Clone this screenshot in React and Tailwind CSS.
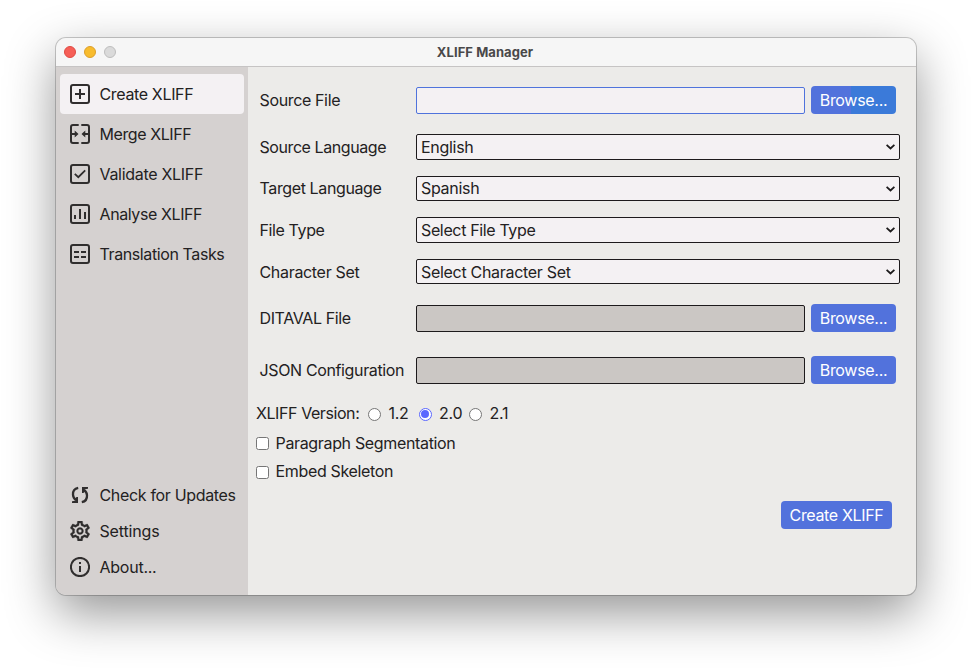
import React from "react";

const iconProps = {
  width: 20,
  height: 20,
  viewBox: "0 0 20 20",
  fill: "none",
  stroke: "#302e2e",
  strokeWidth: 2,
  className: "shrink-0",
};

const Frame = () => <rect x="1" y="1" width="18" height="18" rx="2" />;

const CreateIcon = () => (
  <svg {...iconProps}>
    <Frame />
    <path d="M10 5v10M5 10h10" />
  </svg>
);

const MergeIcon = () => (
  <svg {...iconProps}>
    <path d="M8.700 1H3Q1 1 1 3v14q0 2 2 2h5.700M11.300 1H17q2 0 2 2v14q0 2-2 2h-5.700" />
    <path d="M1 10h5M19 10h-5" />
    <path d="M4.700 6.500L8.500 10l-3.800 3.500zM15.300 6.500L11.500 10l3.800 3.500z" fill="#302e2e" stroke="none" />
  </svg>
);

const ValidateIcon = () => (
  <svg {...iconProps}>
    <Frame />
    <path d="M4.800 9.800l3.500 3.400L15.200 6.300" strokeWidth="1.800" />
  </svg>
);

const AnalyseIcon = () => (
  <svg {...iconProps}>
    <Frame />
    <path d="M5 11v4M10 5v10M15 8v7" />
  </svg>
);

const TasksIcon = () => (
  <svg {...iconProps}>
    <Frame />
    <path d="M4 8h5M11 8h5M4 13h5M11 13h5" />
  </svg>
);

const UpdatesIcon = () => (
  <svg {...iconProps}>
    <path
      d="M8.200 2.800C4.500 3.500 2.800 6.500 3 9.700c.1 2.300 1.200 4 3 5.300M11.800 17.200c3.700-.7 5.400-3.700 5.200-6.900-.1-2.300-1.200-4-3-5.300"
      strokeWidth="2.300"
    />
    <path d="M2 16.200l3.200-.5L6.300 12H8v6H2zM18 3.800l-3.200.5L13.700 8H12V2h6z" fill="#302e2e" stroke="none" />
  </svg>
);

const SettingsIcon = () => (
  <svg {...iconProps} viewBox="2 2 20 20">
    <path
      fill="#302e2e"
      stroke="#302e2e"
      strokeWidth="0.3"
      d="M19.430 12.980c.04-.32.07-.64.07-.98 0-.34-.03-.66-.07-.98l2.110-1.650c.19-.15.24-.42.12-.64l-2-3.460c-.09-.16-.26-.25-.44-.25-.06 0-.12.01-.17.03l-2.490 1c-.52-.4-1.080-.73-1.690-.98l-.38-2.650C14.460 2.180 14.250 2 14 2h-4c-.25 0-.46.18-.49.42l-.38 2.650c-.61.25-1.170.59-1.690.98l-2.490-1c-.06-.02-.12-.03-.18-.03-.17 0-.34.09-.43.25l-2 3.460c-.13.22-.07.49.12.64l2.110 1.650c-.04.32-.07.65-.07.98 0 .33.03.66.07.98l-2.110 1.650c-.19.15-.24.42-.12.64l2 3.460c.09.16.26.25.44.25.06 0 .12-.01.17-.03l2.490-1c.52.4 1.080.73 1.690.98l.38 2.650c.03.24.24.42.49.42h4c.25 0 .46-.18.49-.42l.38-2.650c.61-.25 1.170-.59 1.690-.98l2.490 1c.06.02.12.03.18.03.17 0 .34-.09.43-.25l2-3.460c.12-.22.07-.49-.12-.64l-2.110-1.650zm-1.980-1.710c.04.31.05.52.05.73 0 .21-.02.43-.05.73l-.14 1.130.89.7 1.080.84-.7 1.210-1.270-.51-1.040-.42-.9.68c-.43.32-.84.56-1.250.73l-1.060.43-.16 1.130-.2 1.350h-1.400l-.19-1.350-.16-1.130-1.060-.43c-.43-.18-.83-.41-1.230-.71l-.91-.7-1.060.43-1.270.51-.7-1.210 1.080-.84.89-.7-.14-1.130c-.03-.31-.05-.54-.05-.74s.02-.43.05-.73l.14-1.130-.89-.7-1.080-.84.7-1.210 1.270.51 1.040.42.9-.68c.43-.32.84-.56 1.250-.73l1.060-.43.16-1.130.2-1.350h1.390l.19 1.350.16 1.130 1.060.43c.43.18.83.41 1.230.71l.91.7 1.060-.43 1.270-.51.7 1.210-1.070.85-.89.7.14 1.130zM12 8.500c-1.930 0-3.500 1.570-3.500 3.500s1.570 3.500 3.500 3.500 3.500-1.570 3.500-3.500-1.570-3.500-3.500-3.500zm0 5.200c-.94 0-1.700-.76-1.700-1.700s.76-1.700 1.700-1.700 1.700.76 1.700 1.700-.76 1.700-1.700 1.700z"
    />
  </svg>
);

const AboutIcon = () => (
  <svg {...iconProps}>
    <circle cx="10" cy="10" r="9.100" />
    <path d="M10 9v6M10 5v2" />
  </svg>
);

const mainItems = [
  { label: "Create XLIFF", Icon: CreateIcon, active: true, track: "tracking-[-0.35px]" },
  { label: "Merge XLIFF", Icon: MergeIcon, track: "tracking-[-0.42px]" },
  { label: "Validate XLIFF", Icon: ValidateIcon, track: "tracking-[-0.3px]" },
  { label: "Analyse XLIFF", Icon: AnalyseIcon, track: "tracking-[-0.4px]" },
  { label: "Translation Tasks", Icon: TasksIcon, track: "tracking-[-0.4px]" },
];

const footerItems = [
  { label: "Check for Updates", Icon: UpdatesIcon, track: "tracking-[-0.33px]" },
  { label: "Settings", Icon: SettingsIcon, track: "tracking-[-0.15px]" },
  { label: "About...", Icon: AboutIcon, track: "tracking-[-0.25px]" },
];

function NavItem({ item, height }) {
  const { Icon } = item;
  return (
    <div className={`flex items-center gap-[9.500px] rounded pl-2.5 ${height} ${item.active ? "bg-[#f4f1f3]" : ""}`}>
      <Icon />
      <span className={item.track}>{item.label}</span>
    </div>
  );
}

function Row({ label, track, className, children }) {
  return (
    <div className={`flex items-center ${className}`}>
      <span className={`w-[156.500px] shrink-0 ${track}`}>{label}</span>
      {children}
    </div>
  );
}

function Select({ value, height, track }) {
  return (
    <div className={`flex w-[484px] items-center justify-between rounded-[2px] border border-[#1d1a1c] bg-[#f4f1f3] pr-1 pl-1 ${height}`}>
      <span className={track}>{value}</span>
      <svg width="9" height="6" viewBox="0 0 9 6" fill="none" stroke="#1d1b1c" strokeWidth="1.800">
        <path d="M0.600 0.800L4.500 4.500L8.400 0.800" />
      </svg>
    </div>
  );
}

function Button({ children, className }) {
  return (
    <button className={`h-7 shrink-0 rounded text-center text-white ${className}`}>{children}</button>
  );
}

function Radio({ checked }) {
  return (
    <span className={`flex size-[13px] items-center justify-center rounded-full border bg-white ${checked ? "border-[#5a67ff]" : "border-[#767676]"}`}>
      {checked && <span className="size-[8px] shrink-0 rounded-full bg-[#5a67ff]" />}
    </span>
  );
}

function Check({ label, track, boxClass }) {
  return (
    <div className="flex h-7 items-center gap-[6.500px]">
      <span className={`size-[13px] rounded-[2.500px] border border-[#767676] bg-white ${boxClass}`} />
      <span className={track}>{label}</span>
    </div>
  );
}

export default function App() {
  return (
    <div className="h-[669px] w-[972px] overflow-hidden bg-white px-14 pt-[38px] font-['Inter',sans-serif] text-[16px] leading-5 whitespace-nowrap text-[#232122]">
      <div className="flex h-[557px] w-[860px] flex-col overflow-hidden rounded-[10px] bg-[#ecebe9] shadow-[0_0_0_1px_rgba(0,0,0,0.2),0_18px_50px_rgba(0,0,0,0.42)]">
        <header className="flex h-[29px] shrink-0 items-center border-b border-[#c6c4c4] bg-[#f6f6f6] px-2">
          <div className="flex w-[160px] gap-2">
            <span className="size-3 rounded-full border border-[#df4a43] bg-[#f65f57]" />
            <span className="size-3 rounded-full border border-[#dc9f2a] bg-[#f8bc2e]" />
            <span className="size-3 rounded-full border border-[#bdbdbd] bg-[#dadada]" />
          </div>
          <h1 className="flex-1 pr-[162px] text-center text-[13px] font-bold tracking-[0.06px] text-[#494849]">XLIFF Manager</h1>
        </header>
        <div className="flex min-h-0 flex-1">
          <nav className="flex w-48 shrink-0 flex-col justify-between bg-[#d5d1d0] px-1 pt-[7px] pb-[10px]">
            <div>
              {mainItems.map((item) => (
                <NavItem key={item.label} item={item} height="h-10" />
              ))}
            </div>
            <div>
              {footerItems.map((item) => (
                <NavItem key={item.label} item={item} height="h-9" />
              ))}
            </div>
          </nav>
          <main className="flex-1 pt-[19px] pl-2">
            <div className="pl-[3.500px]">
              <Row label="Source File" track="tracking-[-0.36px]" className="h-7">
                <div className="mr-1.5 h-[27px] w-[389px] rounded-[2px] border border-[#4f73dc] bg-[#f4f1f3]" />
                <Button className="w-[85px] bg-linear-to-r from-[#5272dc] from-[47%] to-[#3b7ad9] to-[47%] tracking-[-0.3px]">Browse...</Button>
              </Row>
              <Row label="Source Language" track="tracking-[-0.42px]" className="mt-5 h-[26px]">
                <Select value="English" height="h-[26px]" track="tracking-[-0.3px]" />
              </Row>
              <Row label="Target Language" track="pb-px tracking-[-0.38px]" className="mt-4 h-[25px]">
                <Select value="Spanish" height="h-[25px]" track="pb-px tracking-[-0.3px]" />
              </Row>
              <Row label="File Type" track="tracking-[-0.38px]" className="mt-4 h-[26px]">
                <Select value="Select File Type" height="h-[26px]" track="tracking-[-0.36px]" />
              </Row>
              <Row label="Character Set" track="tracking-[-0.32px]" className="mt-4 h-[25px]">
                <Select value="Select Character Set" height="h-[25px]" track="tracking-[-0.3px]" />
              </Row>
              <Row label="DITAVAL File" track="tracking-[-0.38px]" className="mt-5 h-7">
                <div className="mt-px mr-1.5 h-[27px] w-[389px] rounded-[2px] border border-[#1d1a1c] bg-[#cbc7c4]" />
                <Button className="w-[85px] bg-[#5272dc] tracking-[-0.3px]">Browse...</Button>
              </Row>
              <Row label="JSON Configuration" track="tracking-[-0.36px]" className="mt-6 h-7">
                <div className="mt-px mr-1.5 h-[27px] w-[389px] rounded-[2px] border border-[#1d1a1c] bg-[#cbc7c4]" />
                <Button className="w-[85px] bg-[#5272dc] tracking-[-0.3px]">Browse...</Button>
              </Row>
            </div>
            <div className="mt-[15px] flex h-[30px] items-center">
              <span className="w-28 pb-0.5 tracking-[-0.42px]">XLIFF Version:</span>
              {["1.2", "2.0", "2.1"].map((version) => (
                <label key={version} className="flex w-[50.500px] items-center gap-[7.500px] tracking-[-0.25px]">
                  <Radio checked={version === "2.0"} />
                  <span className="pb-0.5">{version}</span>
                </label>
              ))}
            </div>
            <Check label="Paragraph Segmentation" track="tracking-[-0.34px]" boxClass="mt-px" />
            <Check label="Embed Skeleton" track="tracking-[-0.34px]" boxClass="mt-0.5" />
            <div className="mt-4 flex justify-end pr-6">
              <Button className="w-[111px] bg-[#5272dc] tracking-[-0.35px]">Create XLIFF</Button>
            </div>
          </main>
        </div>
      </div>
    </div>
  );
}
